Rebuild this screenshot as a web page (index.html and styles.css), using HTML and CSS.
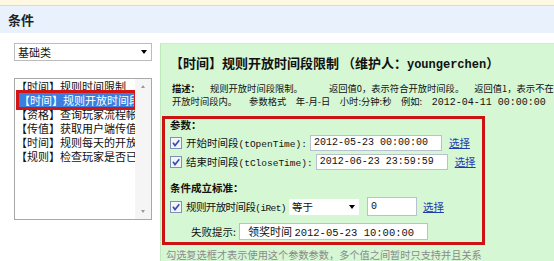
FILE: index.html
```html
<!DOCTYPE html>
<html lang="zh">
<head>
<meta charset="utf-8">
<title>条件</title>
<link rel="stylesheet" href="styles.css">
</head>
<body>
<div class="top"></div>
<div class="header">条件</div>
<div class="main">
  <div class="side">
    <div class="select"><span>基础类</span><span class="arrow"></span></div>
    <div class="listbox">
      <div class="items">
        <div class="item">【时间】规则时间限制</div>
        <div class="item sel">【时间】规则开放时间段限制</div>
        <div class="item">【资格】查询玩家流程帐号</div>
        <div class="item">【传值】获取用户端传值</div>
        <div class="item">【时间】规则每天的开放时间</div>
        <div class="item">【规则】检查玩家是否已领取</div>
      </div>
      <div class="scroll"><span class="up"></span><span class="down"></span></div>
    </div>
  </div>
  <div class="panel">
    <div class="title">【时间】规则开放时间段限制 （维护人：<span class="mono-b">youngerchen</span>）</div>
    <div class="desc">
      <div><b class="dlabel">描述：</b>规则开放时间段限制。<span class="g26"></span>返回值0，表示符合开放时间段。<span class="g10"></span>返回值1，表示不在</div>
      <div class="l2">开放时间段内。<span class="g12"></span>参数格式 年-月-日 小时:分钟:秒 例如: <span class="mono">2012-04-11 00:00:00</span></div>
    </div>
    <div class="params">
      <div class="ptitle">参数：</div>
      <div class="row">
        <svg class="cb" width="12" height="12" viewBox="0 0 12 12"><rect x="0.5" y="0.5" width="11" height="11" fill="#f3f5fb" stroke="#7f91b8"/><path d="M3 5.8 L5 8.5 L9.3 3.2" fill="none" stroke="#3a4fae" stroke-width="1.7"/></svg>
        <span class="lbl">开始时间段<span class="mono-s">(tOpenTime):</span></span>
        <span class="inp w132">2012-05-23 00:00:00</span>
        <a class="link" href="#">选择</a>
      </div>
      <div class="row">
        <svg class="cb" width="12" height="12" viewBox="0 0 12 12"><rect x="0.5" y="0.5" width="11" height="11" fill="#f3f5fb" stroke="#7f91b8"/><path d="M3 5.8 L5 8.5 L9.3 3.2" fill="none" stroke="#3a4fae" stroke-width="1.7"/></svg>
        <span class="lbl">结束时间段<span class="mono-s">(tCloseTime):</span></span>
        <span class="inp w132">2012-06-23 23:59:59</span>
        <a class="link" href="#">选择</a>
      </div>
      <div class="ctitle">条件成立标准：</div>
      <div class="row r3">
        <svg class="cb" width="12" height="12" viewBox="0 0 12 12"><rect x="0.5" y="0.5" width="11" height="11" fill="#f3f5fb" stroke="#7f91b8"/><path d="M3 5.8 L5 8.5 L9.3 3.2" fill="none" stroke="#3a4fae" stroke-width="1.7"/></svg>
        <span class="lbl">规则开放时间段<span class="mono-s">(iRet)</span></span>
        <span class="dd"><span>等于</span><span class="arrow"></span></span>
        <span class="inp num">0</span>
        <a class="link" href="#">选择</a>
      </div>
      <div class="row r4">
        <span class="lbl">失败提示:</span>
        <span class="inp w189">领奖时间 <span class="mono-m">2012-05-23 10:00:00</span></span>
      </div>
    </div>
    <div class="note">勾选复选框才表示使用这个参数参数，多个值之间暂时只支持并且关系</div>
  </div>
</div>
</body>
</html>
```
FILE: styles.css
```css
html, body {
  margin: 0;
  padding: 0;
}
body {
  width: 554px;
  height: 261px;
  overflow: hidden;
  background: #ffffff;
  font-family: "Noto Sans CJK SC", "Liberation Sans", sans-serif;
  color: #111;
}
.top {
  height: 5px;
  background: #fdf8e1;
  border-bottom: 1px solid #d2dae7;
}
.header {
  height: 27px;
  line-height: 27px;
  background: #e9f2fc;
  padding-left: 8px;
  font-size: 13px;
  font-weight: bold;
  color: #222;
}
.main {
  display: flex;
  padding-top: 10px;
}
.side {
  flex: none;
  width: 138px;
  margin-left: 14px;
  margin-right: 8px;
}
.select {
  height: 18px;
  box-sizing: border-box;
  border: 1px solid #bcbcbc;
  background: #fff;
  display: flex;
  align-items: center;
  justify-content: space-between;
  padding: 0 4px 0 3px;
  font-size: 11px;
}
.arrow {
  width: 0;
  height: 0;
  border-left: 3.5px solid transparent;
  border-right: 3.5px solid transparent;
  border-top: 4px solid #000;
}
.listbox {
  margin-top: 17px;
  height: 142px;
  box-sizing: border-box;
  border: 1px solid #a8a8a8;
  background: #fff;
  display: flex;
}
.items {
  flex: 1;
  overflow: hidden;
  font-size: 11px;
  line-height: 14px;
  white-space: nowrap;
  padding-left: 1px;
}
.item.sel {
  margin-left: 3px;
  margin-right: 1px;
  background: #3a7fe0;
  color: #fff;
  outline: 3px solid #d31515;
}
.scroll {
  flex: none;
  width: 16px;
  background: #f5f5f5;
  display: flex;
  flex-direction: column;
  justify-content: space-between;
  align-items: center;
  padding: 6px 0;
}
.up {
  width: 0;
  height: 0;
  border-left: 2.5px solid transparent;
  border-right: 2.5px solid transparent;
  border-bottom: 3px solid #999;
}
.down {
  width: 0;
  height: 0;
  border-left: 2.5px solid transparent;
  border-right: 2.5px solid transparent;
  border-top: 3px solid #999;
}
.panel {
  flex: none;
  width: 640px;
  height: 240px;
  box-sizing: border-box;
  background: #d6f7d4;
  border-left: 1px solid #bfe8bd;
  border-top: 1px solid #c8efc6;
}
.title {
  padding: 10px 0 0 9px;
  font-size: 13px;
  font-weight: bold;
  line-height: 18px;
  white-space: nowrap;
}
.mono-b {
  font-family: "Liberation Mono", monospace;
  font-size: 12px;
  font-weight: bold;
}
.desc {
  margin-top: 8px;
  padding-left: 11px;
  font-size: 9.3px;
  line-height: 13px;
  white-space: nowrap;
}
.dlabel {
  margin-right: 10px;
}
.g26, .g10, .g12 {
  display: inline-block;
}
.g26 { width: 26px; }
.g10 { width: 10px; }
.g12 { width: 12px; }
.l2 {
  word-spacing: 7.5px;
}
.mono {
  font-family: "Liberation Mono", monospace;
  font-size: 10px;
  word-spacing: 0;
}
.params {
  margin: 7px 0 0 1px;
  width: 323px;
  height: 129px;
  box-sizing: border-box;
  border: 3px solid #cc1313;
  padding-left: 5px;
  font-size: 10.5px;
}
.ptitle {
  font-weight: bold;
  line-height: 12px;
  height: 14px;
}
.row {
  display: flex;
  align-items: center;
  height: 19px;
  white-space: nowrap;
}
.cb {
  flex: none;
  margin-right: 4px;
}
.lbl {
  margin-right: 3px;
}
.r3 .lbl {
  letter-spacing: -0.6px;
}
.mono-s {
  font-family: "Liberation Mono", monospace;
  font-size: 9.5px;
}
.inp {
  display: inline-block;
  box-sizing: border-box;
  height: 16px;
  line-height: 14px;
  background: #fff;
  border: 1px solid #b8c2cc;
  padding-left: 3px;
  font-family: "Liberation Mono", monospace;
  font-size: 10px;
  white-space: nowrap;
  overflow: hidden;
}
.w132 { width: 132px; }
.w189 {
  width: 189px;
  height: 17px;
  line-height: 15px;
  padding-left: 8px;
  font-family: "Noto Sans CJK SC", sans-serif;
  font-size: 11px;
}
.mono-m {
  font-family: "Liberation Mono", monospace;
  font-size: 10.5px;
}
.num {
  width: 50px;
  height: 19px;
  line-height: 17px;
  margin-left: 8px;
}
.link {
  margin-left: 7px;
  color: #1f3cae;
  text-decoration: underline;
  font-size: 10.5px;
}
.r3 .link { margin-left: 6px; }
.ctitle {
  margin-top: 10px;
  font-weight: bold;
  line-height: 14px;
  height: 14px;
}
.r3 { margin-top: 2px; }
.r4 {
  margin-top: 6px;
  padding-left: 21px;
}
.dd {
  display: inline-flex;
  align-items: center;
  justify-content: space-between;
  box-sizing: border-box;
  width: 70px;
  height: 16px;
  background: #fff;
  padding: 0 4px 0 3px;
}
.note {
  margin-top: 3px;
  padding-left: 5px;
  font-size: 10.2px;
  line-height: 14px;
  color: #8a8a8a;
  white-space: nowrap;
}
```
